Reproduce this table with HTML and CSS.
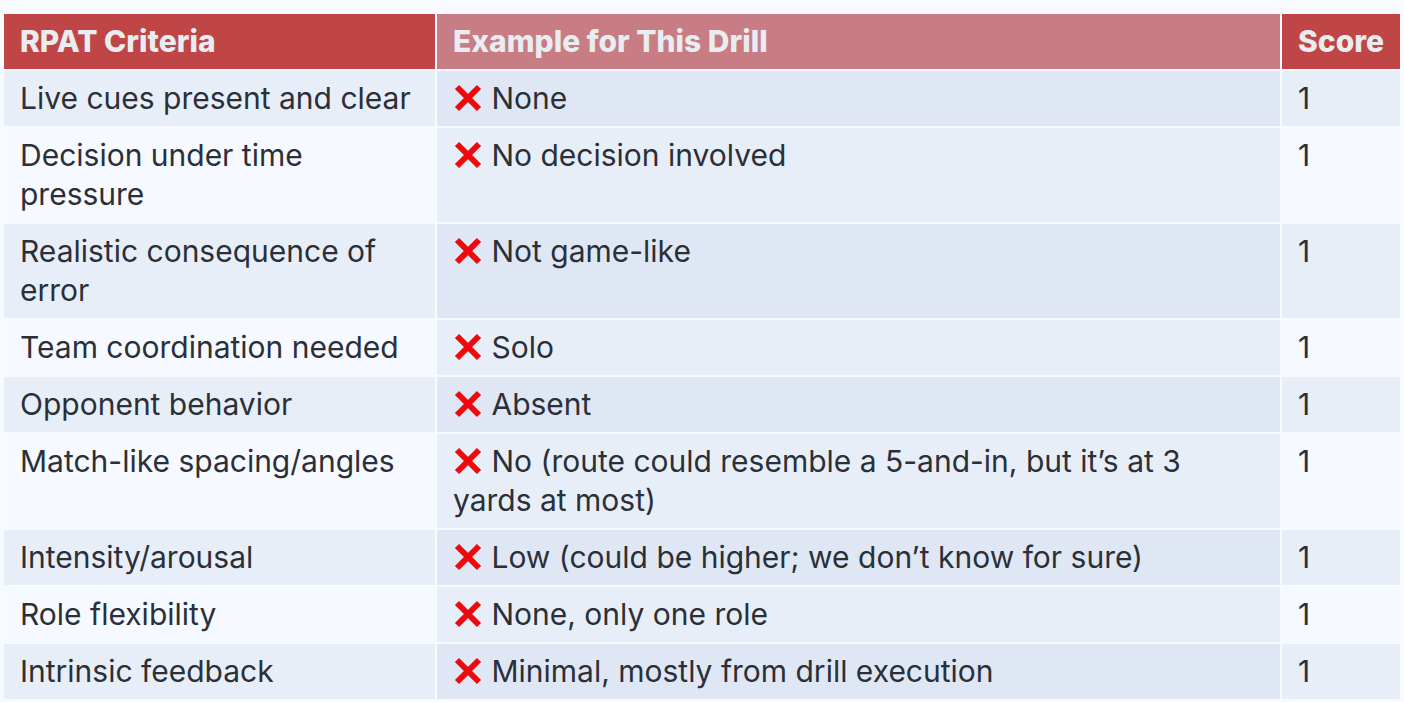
FILE: index.html
```html
<!DOCTYPE html>
<html lang="en">
<head>
<meta charset="utf-8">
<title>RPAT Criteria</title>
<link rel="stylesheet" href="styles.css">
</head>
<body>
<table class="rpat">
  <colgroup>
    <col class="c1"><col class="c2"><col class="c3">
  </colgroup>
  <thead>
    <tr><th>RPAT Criteria</th><th class="mid">Example for This Drill</th><th>Score</th></tr>
  </thead>
  <tbody>
    <tr><td>Live cues present and clear</td><td class="mid"><svg class="x" viewBox="0 0 30 30"><path d="M4 4L26 26M26 4L4 26"/></svg> None</td><td>1</td></tr>
    <tr><td>Decision under time pressure</td><td class="mid"><svg class="x" viewBox="0 0 30 30"><path d="M4 4L26 26M26 4L4 26"/></svg> No decision involved</td><td>1</td></tr>
    <tr><td>Realistic consequence of error</td><td class="mid"><svg class="x" viewBox="0 0 30 30"><path d="M4 4L26 26M26 4L4 26"/></svg> Not game-like</td><td>1</td></tr>
    <tr><td>Team coordination needed</td><td class="mid"><svg class="x" viewBox="0 0 30 30"><path d="M4 4L26 26M26 4L4 26"/></svg> Solo</td><td>1</td></tr>
    <tr><td>Opponent behavior</td><td class="mid"><svg class="x" viewBox="0 0 30 30"><path d="M4 4L26 26M26 4L4 26"/></svg> Absent</td><td>1</td></tr>
    <tr><td>Match-like spacing/angles</td><td class="mid"><svg class="x" viewBox="0 0 30 30"><path d="M4 4L26 26M26 4L4 26"/></svg> No (route could resemble a 5-and-in, but it’s at 3 yards at most)</td><td>1</td></tr>
    <tr><td>Intensity/arousal</td><td class="mid"><svg class="x" viewBox="0 0 30 30"><path d="M4 4L26 26M26 4L4 26"/></svg> Low (could be higher; we don’t know for sure)</td><td>1</td></tr>
    <tr><td>Role flexibility</td><td class="mid"><svg class="x" viewBox="0 0 30 30"><path d="M4 4L26 26M26 4L4 26"/></svg> None, only one role</td><td>1</td></tr>
    <tr><td>Intrinsic feedback</td><td class="mid"><svg class="x" viewBox="0 0 30 30"><path d="M4 4L26 26M26 4L4 26"/></svg> Minimal, mostly from drill execution</td><td>1</td></tr>
  </tbody>
</table>
</body>
</html>
```

FILE: styles.css
```css
html, body {
  margin: 0;
  background: #f7faff;
}
body {
  padding: 12px 2px 0 2px;
  font-family: Inter, "Noto Sans", sans-serif;
  color: #2b3038;
}
.rpat {
  border-collapse: separate;
  border-spacing: 2px;
  width: 1400px;
  table-layout: fixed;
  font-size: 30px;
  line-height: 39px;
}
.c1 { width: 431px; }
.c2 { width: 843px; }
.c3 { width: 118px; }
.rpat th, .rpat td {
  padding: 8px 16px;
  text-align: left;
  vertical-align: top;
}
.rpat th {
  background: #c04546;
  color: #e9ecf0;
  font-weight: 800;
}
.rpat th.mid {
  background: #c77d83;
}
.rpat tbody tr:nth-child(odd) td { background: #e8eef8; }
.rpat tbody tr:nth-child(even) td { background: #f6f9ff; }
.rpat tbody tr:nth-child(odd) td.mid { background: #dfe7f5; }
.rpat tbody tr:nth-child(even) td.mid { background: #e8eef8; }
.x {
  width: 30px;
  height: 30px;
  vertical-align: -4px;
}
.x path {
  stroke: #ec0a0f;
  stroke-width: 6;
  fill: none;
}
```
